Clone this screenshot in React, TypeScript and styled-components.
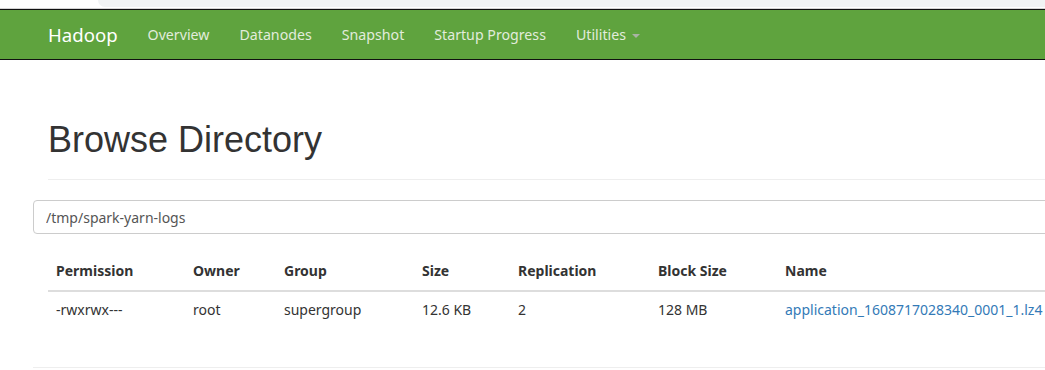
import React from "react";
import styled, { createGlobalStyle } from "styled-components";

const GlobalStyle = createGlobalStyle`
  html, body {
    margin: 0;
    padding: 0;
    background: #ffffff;
    overflow: hidden;
  }
  body {
    font-family: "Noto Sans", "Open Sans", sans-serif;
    font-size: 14px;
    color: #333333;
  }
`;

const TopStrip = styled.div`
  display: flex;
  height: 8px;
  border-bottom: 1px solid #d4d4d4;
  background: #ffffff;
`;

const StripBlank = styled.div`
  width: 98px;
`;

const StripTab = styled.div`
  flex: 1;
  height: 7px;
  background: #f1f3f4;
  border-bottom-left-radius: 9px;
`;

const Navbar = styled.nav`
  display: flex;
  align-items: center;
  height: 49px;
  padding-left: 33px;
  background: #5fa33e;
  border-top: 1px solid #111;
  border-bottom: 1px solid #111;
`;

const Brand = styled.a`
  padding: 0 15px;
  font-size: 18.6px;
  color: #ffffff;
  text-decoration: none;
`;

const NavLink = styled.a`
  display: flex;
  align-items: center;
  padding: 0 15px;
  font-size: 14.2px;
  color: #e2ecdc;
  text-decoration: none;
`;

const Caret = styled.span`
  display: inline-block;
  margin-left: 6px;
  margin-top: 2px;
  border-top: 4px solid #a9b3a4;
  border-left: 4px solid transparent;
  border-right: 4px solid transparent;
`;

const Page = styled.main`
  padding-left: 33px;
  width: 1170px;
`;

const Container = styled.div`
  padding: 0 15px;
`;

const PageHeader = styled.div`
  margin-top: 60px;
  padding-bottom: 19px;
  border-bottom: 1px solid #eeeeee;
`;

const Title = styled.h1`
  margin: 0;
  font-family: "Liberation Sans", Arial, sans-serif;
  font-size: 36px;
  font-weight: 400;
  line-height: 40px;
  color: #333333;
`;

const PathInput = styled.input`
  display: block;
  box-sizing: border-box;
  margin: 20px 0 0 -15px;
  width: calc(100% + 30px);
  height: 34px;
  padding: 6px 12px;
  font-family: "Noto Sans", "Open Sans", sans-serif;
  font-size: 14px;
  color: #555555;
  border: 1px solid #cccccc;
  border-radius: 4px;
  outline: none;
`;

const Table = styled.table`
  margin-top: 19px;
  width: 100%;
  border-collapse: collapse;
  table-layout: fixed;
`;

const Th = styled.th<{ $w?: number }>`
  box-sizing: border-box;
  width: ${(p) => (p.$w ? `${p.$w}px` : "auto")};
  padding: 8px 8px 9px;
  text-align: left;
  font-weight: 700;
  line-height: 20px;
  color: #333333;
  border-bottom: 2px solid #dddddd;
`;

const Td = styled.td`
  padding: 8px;
  line-height: 20px;
  white-space: nowrap;
  overflow: visible;
`;

const FileLink = styled.a`
  color: #337ab7;
  text-decoration: none;
`;

const Rule = styled.hr`
  margin: 39px 0 0 -15px;
  border: 0;
  border-top: 1px solid #eeeeee;
`;

const navItems = ["Overview", "Datanodes", "Snapshot", "Startup Progress"];

const columns: { label: string; width?: number }[] = [
  { label: "Permission", width: 137 },
  { label: "Owner", width: 91 },
  { label: "Group", width: 138 },
  { label: "Size", width: 96 },
  { label: "Replication", width: 140 },
  { label: "Block Size", width: 127 },
  { label: "Name" },
];

const files = [
  {
    permission: "-rwxrwx---",
    owner: "root",
    group: "supergroup",
    size: "12.6 KB",
    replication: "2",
    blockSize: "128 MB",
    name: "application_1608717028340_0001_1.lz4",
  },
];

export default function App() {
  return (
    <>
      <GlobalStyle />
      <TopStrip>
        <StripBlank />
        <StripTab />
      </TopStrip>
      <Navbar>
        <Brand href="#">Hadoop</Brand>
        {navItems.map((item) => (
          <NavLink key={item} href="#">
            {item}
          </NavLink>
        ))}
        <NavLink href="#">
          Utilities
          <Caret />
        </NavLink>
      </Navbar>
      <Page>
        <Container>
          <PageHeader>
            <Title>Browse Directory</Title>
          </PageHeader>
          <PathInput defaultValue="/tmp/spark-yarn-logs" />
          <Table>
            <thead>
              <tr>
                {columns.map((c) => (
                  <Th key={c.label} $w={c.width}>
                    {c.label}
                  </Th>
                ))}
              </tr>
            </thead>
            <tbody>
              {files.map((f) => (
                <tr key={f.name}>
                  <Td>{f.permission}</Td>
                  <Td>{f.owner}</Td>
                  <Td>{f.group}</Td>
                  <Td>{f.size}</Td>
                  <Td>{f.replication}</Td>
                  <Td>{f.blockSize}</Td>
                  <Td>
                    <FileLink href="#">{f.name}</FileLink>
                  </Td>
                </tr>
              ))}
            </tbody>
          </Table>
          <Rule />
        </Container>
      </Page>
    </>
  );
}
